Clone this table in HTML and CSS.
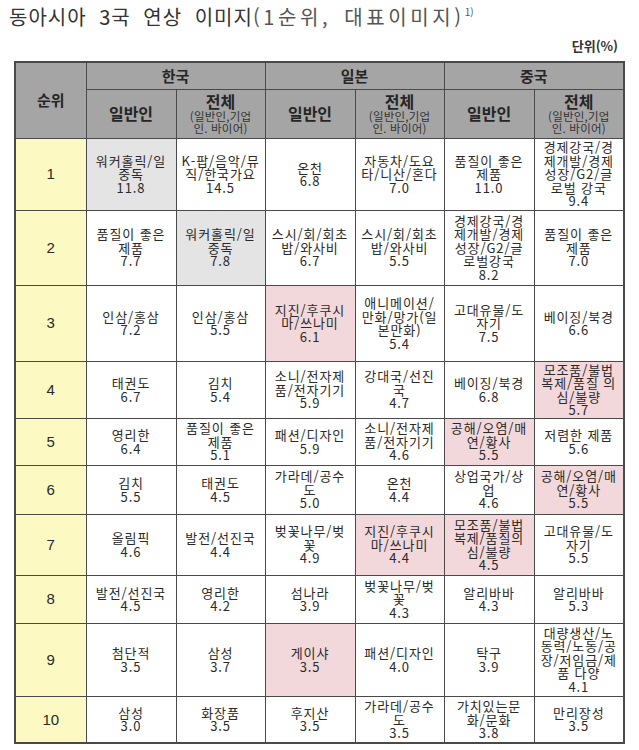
FILE: index.html
```html
<!DOCTYPE html>
<html lang="ko">
<head>
<meta charset="utf-8">
<link rel="stylesheet" href="styles.css">
</head>
<body>
<div class="page">
  <h1 class="title">동아시아 3국 연상 이미지<span class="sub">(1순위, 대표이미지)<sup>1)</sup></span></h1>
  <div class="unit">단위(%)</div>
  <table class="tbl">
    <colgroup>
      <col class="c-rank"><col class="c-a"><col class="c-b"><col class="c-a"><col class="c-b"><col class="c-a"><col class="c-c">
    </colgroup>
    <thead>
      <tr class="h1">
        <th rowspan="2" class="rank-h">순위</th>
        <th colspan="2">한국</th>
        <th colspan="2">일본</th>
        <th colspan="2">중국</th>
      </tr>
      <tr class="h2">
        <th class="big">일반인</th>
        <th><span class="big">전체</span><span class="small">(일반인,기업<br>인. 바이어)</span></th>
        <th class="big">일반인</th>
        <th><span class="big">전체</span><span class="small">(일반인,기업<br>인. 바이어)</span></th>
        <th class="big">일반인</th>
        <th><span class="big">전체</span><span class="small">(일반인,기업<br>인. 바이어)</span></th>
      </tr>
    </thead>
    <tbody>
      <tr class="r1">
        <td class="rank">1</td>
        <td class="gray">워커홀릭/일<br>중독<br>11.8</td>
        <td>K-팝/음악/뮤<br>직/한국가요<br>14.5</td>
        <td>온천<br>6.8</td>
        <td>자동차/도요<br>타/니산/혼다<br>7.0</td>
        <td>품질이 좋은<br>제품<br>11.0</td>
        <td>경제강국/경<br>제개발/경제<br>성장/G2/글<br>로벌 강국<br>9.4</td>
      </tr>
      <tr class="r2">
        <td class="rank">2</td>
        <td>품질이 좋은<br>제품<br>7.7</td>
        <td class="gray">워커홀릭/일<br>중독<br>7.8</td>
        <td>스시/회/회초<br>밥/와사비<br>6.7</td>
        <td>스시/회/회초<br>밥/와사비<br>5.5</td>
        <td>경제강국/경<br>제개발/경제<br>성장/G2/글<br>로벌강국<br>8.2</td>
        <td>품질이 좋은<br>제품<br>7.0</td>
      </tr>
      <tr class="r3">
        <td class="rank">3</td>
        <td>인삼/홍삼<br>7.2</td>
        <td>인삼/홍삼<br>5.5</td>
        <td class="pink">지진/후쿠시<br>마/쓰나미<br>6.1</td>
        <td>애니메이션/<br>만화/망가(일<br>본만화)<br>5.4</td>
        <td>고대유물/도<br>자기<br>7.5</td>
        <td>베이징/북경<br>6.6</td>
      </tr>
      <tr class="r4">
        <td class="rank">4</td>
        <td>태권도<br>6.7</td>
        <td>김치<br>5.4</td>
        <td>소니/전자제<br>품/전자기기<br>5.9</td>
        <td>강대국/선진<br>국<br>4.7</td>
        <td>베이징/북경<br>6.8</td>
        <td class="pink">모조품/불법<br>복제/품질 의<br>심/불량<br>5.7</td>
      </tr>
      <tr class="r5">
        <td class="rank">5</td>
        <td>영리한<br>6.4</td>
        <td>품질이 좋은<br>제품<br>5.1</td>
        <td>패션/디자인<br>5.9</td>
        <td>소니/전자제<br>품/전자기기<br>4.6</td>
        <td class="pink">공해/오염/매<br>연/황사<br>5.5</td>
        <td>저렴한 제품<br>5.6</td>
      </tr>
      <tr class="r6">
        <td class="rank">6</td>
        <td>김치<br>5.5</td>
        <td>태권도<br>4.5</td>
        <td>가라데/공수<br>도<br>5.0</td>
        <td>온천<br>4.4</td>
        <td>상업국가/상<br>업<br>4.6</td>
        <td class="pink">공해/오염/매<br>연/황사<br>5.5</td>
      </tr>
      <tr class="r7">
        <td class="rank">7</td>
        <td>올림픽<br>4.6</td>
        <td>발전/선진국<br>4.4</td>
        <td>벚꽃나무/벚<br>꽃<br>4.9</td>
        <td class="pink">지진/후쿠시<br>마/쓰나미<br>4.4</td>
        <td class="pink">모조품/불법<br>복제/품질의<br>심/불량<br>4.5</td>
        <td>고대유물/도<br>자기<br>5.5</td>
      </tr>
      <tr class="r8">
        <td class="rank">8</td>
        <td>발전/선진국<br>4.5</td>
        <td>영리한<br>4.2</td>
        <td>섬나라<br>3.9</td>
        <td>벚꽃나무/벚<br>꽃<br>4.3</td>
        <td>알리바바<br>4.3</td>
        <td>알리바바<br>5.3</td>
      </tr>
      <tr class="r9">
        <td class="rank">9</td>
        <td>첨단적<br>3.5</td>
        <td>삼성<br>3.7</td>
        <td class="pink">게이샤<br>3.5</td>
        <td>패션/디자인<br>4.0</td>
        <td>탁구<br>3.9</td>
        <td>대량생산/노<br>동력/노동/공<br>장/저임금/제<br>품 다양<br>4.1</td>
      </tr>
      <tr class="r10">
        <td class="rank">10</td>
        <td>삼성<br>3.0</td>
        <td>화장품<br>3.5</td>
        <td>후지산<br>3.5</td>
        <td>가라데/공수<br>도<br>3.5</td>
        <td>가치있는문<br>화/문화<br>3.8</td>
        <td>만리장성<br>3.5</td>
      </tr>
    </tbody>
  </table>
</div>
</body>
</html>
```

FILE: styles.css
```css
* { box-sizing: border-box; }
html, body { margin: 0; padding: 0; background: #ffffff; }
body {
  font-family: "Noto Sans CJK KR", "Noto Sans", sans-serif;
  color: #2b2b2b;
  width: 639px;
  height: 750px;
  overflow: hidden;
}
.page {
  padding: 3px 0 0 14px;
  width: 639px;
}
.title {
  margin: 0 0 0 -5px;
  font-size: 20px;
  font-weight: 400;
  line-height: 28px;
  letter-spacing: 1px;
  word-spacing: 6px;
  color: #333333;
  white-space: nowrap;
}
.title .sub {
  color: #555555;
  letter-spacing: 3.6px;
  word-spacing: 4px;
}
.title sup {
  font-size: 10px;
  vertical-align: 9px;
  line-height: 0;
  letter-spacing: 0;
}
.unit {
  width: 608px;
  text-align: right;
  font-size: 13px;
  font-weight: 700;
  line-height: 16px;
  margin-top: 7px;
  height: 23px;
  color: #333;
  padding-right: 4px;
}
.tbl {
  border-collapse: collapse;
  width: 609px;
  table-layout: fixed;
  border: 2px solid #4a4a4a;
}
.c-rank { width: 71px; }
.c-a { width: 90px; }
.c-b { width: 89px; }
.c-c { width: 90px; }
.tbl th, .tbl td {
  border: 1px solid #4a4a4a;
  padding: 0;
  text-align: center;
  vertical-align: middle;
  white-space: nowrap;
}
.tbl th {
  background: #a5a5a5;
  color: #262626;
  font-weight: 700;
}
.h1 th { height: 27px; font-size: 15px; line-height: 18px; }
.h2 th { height: 49px; }
.rank-h { font-size: 16px; }
.big {
  display: block;
  font-size: 16px;
  line-height: 17px;
  font-weight: 700;
}
.h2 th.big { display: table-cell; }
.small {
  display: block;
  font-size: 11.5px;
  font-weight: 400;
  line-height: 12px;
  color: #333;
  letter-spacing: 0.2px;
}
.tbl td {
  font-size: 13px;
  line-height: 13.5px;
  color: #2a2a2a;
  background: #ffffff;
  letter-spacing: 0.9px;
}
.tbl td.rank {
  background: #fcf9c3;
  font-family: "Liberation Sans", Arial, sans-serif;
  font-size: 15px;
  letter-spacing: 0;
}
.tbl td.gray { background: #e4e4e4; }
.tbl td.pink { background: #f2d8da; }
.r1 td { height: 72px; }
.r2 td { height: 75px; }
.r3 td { height: 76px; }
.r4 td { height: 57px; }
.r5 td { height: 47px; }
.r6 td { height: 49px; }
.r7 td { height: 61px; }
.r8 td { height: 48px; }
.r9 td { height: 73px; }
.r10 td { height: 47px; }
```
